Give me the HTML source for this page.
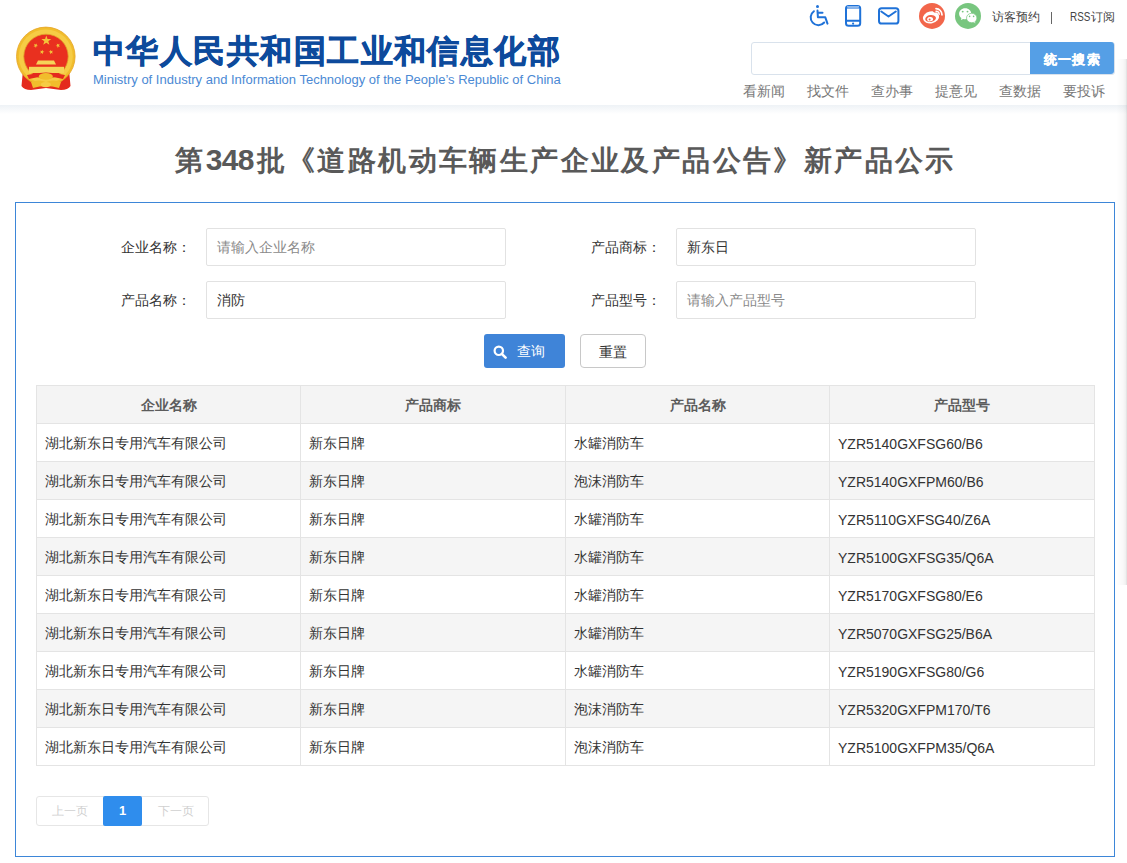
<!DOCTYPE html>
<html><head><meta charset="utf-8">
<style>
*{margin:0;padding:0;box-sizing:border-box;}
html,body{width:1127px;height:863px;overflow:hidden;background:#fff;font-family:"Liberation Sans",sans-serif;color:#333;}
.abs{position:absolute;}
#hdr{position:absolute;left:0;top:0;width:1127px;height:105px;background:#fff;}
#shadow{position:absolute;left:0;top:105px;width:1127px;height:9px;background:linear-gradient(#eef2f6,#fff);}
.cn-title{position:absolute;left:93px;top:29px;font-size:32px;font-weight:bold;-webkit-text-stroke:0.7px #0d4a9c;color:#0d4a9c;white-space:nowrap;letter-spacing:1.45px;line-height:44px;}
.en-title{position:absolute;left:93px;top:71px;font-size:13px;color:#4b89d4;white-space:nowrap;line-height:18px;}
.toplinks{position:absolute;top:8px;font-size:12px;color:#444;white-space:nowrap;line-height:18px;}
.search{position:absolute;left:751px;top:42px;width:364px;height:33px;border:1px solid #d9e2ec;border-radius:3px;background:#fff;}
.sbtn{position:absolute;left:1030px;top:42px;width:84px;height:32px;background:#559fe6;color:#fff;font-size:13px;font-weight:bold;text-align:center;line-height:35px;letter-spacing:1.4px;padding-left:1px;border-radius:0 3px 3px 0;-webkit-text-stroke:0.3px #fff;}
.nav{position:absolute;top:81px;font-size:14px;color:#777;white-space:nowrap;line-height:20px;}
#ptitle{position:absolute;left:2px;top:138px;width:1127px;text-align:center;font-size:28px;font-weight:bold;color:#595959;line-height:44px;white-space:nowrap;letter-spacing:2.4px;}
#box{position:absolute;left:15px;top:202px;width:1100px;height:655px;border:1px solid #3d86d8;}
.lbl{position:absolute;font-size:14px;color:#333;line-height:20px;white-space:nowrap;}
.inp{position:absolute;width:300px;height:38px;border:1px solid #e2e2e2;border-radius:2px;font-size:14px;line-height:37px;padding-left:10px;color:#333;white-space:nowrap;}
.ph{color:#8a8a8a;}
.btn1{position:absolute;left:484px;top:334px;width:81px;height:34px;background:#3f84d8;border-radius:3px;color:#fff;font-size:14px;line-height:34px;}
.btn2{position:absolute;left:580px;top:334px;width:66px;height:34px;border:1px solid #c8c8c8;border-radius:4px;color:#333;font-size:14px;line-height:34px;text-align:center;}
table{position:absolute;left:36px;top:385px;width:1058px;border-collapse:collapse;table-layout:fixed;}
td,th{border:1px solid #e4e4e4;height:38px;font-size:14px;padding:2px 0 0 8px;text-align:left;color:#333;white-space:nowrap;}
th{background:#f4f4f4;font-weight:bold;text-align:center;color:#5c5c5c;padding:2px 0 0 0;}
tr.z td{background:#f5f5f5;}
.pg{position:absolute;top:796px;height:31px;font-size:14px;line-height:29px;text-align:center;}
</style></head><body>
<div id="hdr">
  <!-- emblem -->
  <svg class="abs" style="left:0;top:0" width="90" height="100" viewBox="0 0 90 100">
    <path d="M23 70 L21.5 86 Q24 90 31 90 L46 88 L61 90 Q68 90 70.5 86 L69 70 Z" fill="#e42a1d"/>
    <circle cx="45.8" cy="56.4" r="29.3" fill="#f1bd2c" stroke="#e6a526" stroke-width="0.8"/>
    <circle cx="45.8" cy="56.4" r="27" fill="#f6cc45"/>
    <circle cx="46" cy="56.4" r="22.2" fill="#e9301f" stroke="#e0a02a" stroke-width="0.8"/>
    <polygon points="46.30,35.40 47.53,38.90 51.25,38.99 48.30,41.25 49.36,44.81 46.30,42.70 43.24,44.81 44.30,41.25 41.35,38.99 45.07,38.90" fill="#f3c43a"/>
    <polygon points="36.90,43.52 36.61,45.19 38.05,46.10 36.37,46.34 35.95,47.99 35.20,46.47 33.51,46.58 34.72,45.39 34.09,43.82 35.60,44.61" fill="#f3c43a"/>
    <polygon points="56.80,43.52 58.10,44.61 59.61,43.82 58.98,45.39 60.19,46.58 58.50,46.47 57.75,47.99 57.33,46.34 55.65,46.10 57.09,45.19" fill="#f3c43a"/>
    <polygon points="42.62,49.68 42.78,51.37 44.40,51.87 42.84,52.54 42.86,54.24 41.74,52.97 40.13,53.51 41.00,52.05 39.99,50.69 41.64,51.07" fill="#f3c43a"/>
    <polygon points="50.38,49.68 51.36,51.07 53.01,50.69 52.00,52.05 52.87,53.51 51.26,52.97 50.14,54.24 50.16,52.54 48.60,51.87 50.22,51.37" fill="#f3c43a"/>
    <path d="M38 60.5 L54 60.5 L56 64.5 L36 64.5Z" fill="#f6d458"/>
    <rect x="29" y="66.8" width="35" height="6.2" fill="#f6d458"/>
    <path d="M27 75 Q46 70 65 75 L63 79 Q46 74 29 79Z" fill="#e42a1d"/>
    <ellipse cx="45.8" cy="76.4" rx="7" ry="3.4" fill="#f1bd2c"/>
    <path d="M31 82 Q39 79 46 82 Q53 79 61 82 L59 88 Q46 84 33 88Z" fill="#f1bd2c"/>
    <ellipse cx="45.8" cy="84.6" rx="5" ry="2.6" fill="#f6cc45"/>
  </svg>
  <div class="cn-title">中华人民共和国工业和信息化部</div>
  <div class="en-title">Ministry of Industry and Information Technology of the People’s Republic of China</div>


  <svg class="abs" style="left:800px;top:0" width="190" height="32" viewBox="800 0 190 32">
    <g fill="none" stroke="#1f72d8" stroke-width="2" stroke-linecap="round" stroke-linejoin="round">
      <path d="M817.5 10.6 L817.9 17.3 H825.3 L827.5 23.6"/>
      <path d="M818.4 12.7 H822.5"/>
      <path d="M813.9 11.2 A7.7 7.7 0 1 0 824.2 22.5"/>
      <rect x="846" y="6" width="14.2" height="19.8" rx="2.6"/>
      <path d="M846.5 20.8 H859.8"/>
      <rect x="879" y="8.2" width="19.4" height="15.4" rx="2.6"/>
      <path d="M881.3 11.5 L888.5 16.5 L895.8 11.5"/>
    </g>
    <circle cx="817.5" cy="6.5" r="1.5" fill="#1f72d8"/>
    <path d="M847 6.9 H859" stroke="#a9c9f2" stroke-width="1.4"/><path d="M847 8.1 H859" stroke="#1f72d8" stroke-width="0.9"/>
    <circle cx="853.1" cy="23.6" r="1.1" fill="#1f72d8"/>
    <circle cx="932" cy="15.9" r="13" fill="#f2664b"/>
    <circle cx="968" cy="15.9" r="13" fill="#78c67f"/>
    <ellipse cx="931" cy="17.4" rx="8.2" ry="6" transform="rotate(-12 931 17.4)" fill="#fff"/>
    <circle cx="935" cy="10.6" r="2.1" fill="#f2664b"/>
    <ellipse cx="930.6" cy="18.5" rx="5.4" ry="3.5" transform="rotate(-10 930.6 18.5)" fill="#f2664b"/>
    <ellipse cx="930.1" cy="19.2" rx="3" ry="2.2" transform="rotate(-10 930.1 19.2)" fill="#fff"/>
    <circle cx="929.6" cy="19.6" r="1" fill="#f2664b"/>
    <path d="M936 8.6 A6.2 6.2 0 0 1 942 14.8" fill="none" stroke="#fff" stroke-width="1.7" stroke-linecap="round"/>
    <path d="M936 11.2 A3.2 3.2 0 0 1 939.2 14.2" fill="none" stroke="#fff" stroke-width="1.4" stroke-linecap="round"/>
    <path d="M965.2 8.3 C961.6 8.3 959.1 10.8 959.1 13.8 C959.1 15.6 960 17.1 961.4 18.1 L960.9 20.1 L963.2 18.9 C963.8 19.1 964.5 19.2 965.2 19.2 C968.8 19.2 971.3 16.8 971.3 13.8 C971.3 10.8 968.8 8.3 965.2 8.3Z" fill="#fff"/>
    <path d="M971.7 13.3 C968.8 13.3 966.5 15.4 966.5 18 C966.5 20.6 968.8 22.7 971.7 22.7 C972.3 22.7 972.9 22.6 973.4 22.4 L975.6 23.5 L975.2 21.5 C976.3 20.6 976.9 19.4 976.9 18 C976.9 15.4 974.6 13.3 971.7 13.3Z" fill="#fff" stroke="#78c67f" stroke-width="0.7"/>
    <circle cx="962.7" cy="11.6" r="0.95" fill="#78c67f"/><circle cx="967.5" cy="11.6" r="0.95" fill="#78c67f"/>
    <circle cx="969.6" cy="16.4" r="0.8" fill="#78c67f"/><circle cx="973.6" cy="16.4" r="0.8" fill="#78c67f"/>
  </svg>
  <div class="toplinks" style="left:992px">访客预约</div>
  <div class="abs" style="left:1051px;top:11.5px;width:1px;height:12px;background:#666"></div>
  <div class="toplinks" style="left:1070px"><span style="display:inline-block;transform:scaleX(0.76);transform-origin:0 0;font-size:13px">RSS</span></div>
  <div class="toplinks" style="left:1091px">订阅</div>
  <div class="search"></div>
  <div class="sbtn">统一搜索</div>

  <div class="nav" style="left:743px">看新闻</div>
  <div class="nav" style="left:807px">找文件</div>
  <div class="nav" style="left:871px">查办事</div>
  <div class="nav" style="left:935px">提意见</div>
  <div class="nav" style="left:999px">查数据</div>
  <div class="nav" style="left:1063px">要投诉</div>
</div>
<div id="shadow"></div>

<div id="ptitle">第<span style="font-size:30px;letter-spacing:-0.6px">34</span><span style="font-size:30px;letter-spacing:2px">8</span>批《道路机动车辆生产企业及产品公告》新产品公示</div>

<div id="box"></div>
<div class="lbl" style="left:121px;top:237px">企业名称：</div>
<div class="inp" style="left:206px;top:228px"><span class="ph">请输入企业名称</span></div>
<div class="lbl" style="left:591px;top:237px">产品商标：</div>
<div class="inp" style="left:676px;top:228px">新东日</div>
<div class="lbl" style="left:121px;top:290px">产品名称：</div>
<div class="inp" style="left:206px;top:281px">消防</div>
<div class="lbl" style="left:591px;top:290px">产品型号：</div>
<div class="inp" style="left:676px;top:281px"><span class="ph">请输入产品型号</span></div>

<div class="btn1"><svg style="position:absolute;left:9px;top:11px" width="15" height="14" viewBox="0 0 15 14"><circle cx="5.8" cy="5.8" r="4.2" fill="none" stroke="#fff" stroke-width="2.2"/><path d="M8.8 8.8 L12.6 12.6" stroke="#fff" stroke-width="2.6" stroke-linecap="round"/></svg><span style="position:absolute;left:33px;top:0">查询</span></div>
<div class="btn2">重置</div>

<table>
<colgroup><col style="width:264px"><col style="width:265px"><col style="width:264px"><col style="width:265px"></colgroup>
<tr><th>企业名称</th><th>产品商标</th><th>产品名称</th><th>产品型号</th></tr>
<tr><td>湖北新东日专用汽车有限公司</td><td>新东日牌</td><td>水罐消防车</td><td>YZR5140GXFSG60/B6</td></tr>
<tr class="z"><td>湖北新东日专用汽车有限公司</td><td>新东日牌</td><td>泡沫消防车</td><td>YZR5140GXFPM60/B6</td></tr>
<tr><td>湖北新东日专用汽车有限公司</td><td>新东日牌</td><td>水罐消防车</td><td>YZR5110GXFSG40/Z6A</td></tr>
<tr class="z"><td>湖北新东日专用汽车有限公司</td><td>新东日牌</td><td>水罐消防车</td><td>YZR5100GXFSG35/Q6A</td></tr>
<tr><td>湖北新东日专用汽车有限公司</td><td>新东日牌</td><td>水罐消防车</td><td>YZR5170GXFSG80/E6</td></tr>
<tr class="z"><td>湖北新东日专用汽车有限公司</td><td>新东日牌</td><td>水罐消防车</td><td>YZR5070GXFSG25/B6A</td></tr>
<tr><td>湖北新东日专用汽车有限公司</td><td>新东日牌</td><td>水罐消防车</td><td>YZR5190GXFSG80/G6</td></tr>
<tr class="z"><td>湖北新东日专用汽车有限公司</td><td>新东日牌</td><td>泡沫消防车</td><td>YZR5320GXFPM170/T6</td></tr>
<tr><td>湖北新东日专用汽车有限公司</td><td>新东日牌</td><td>泡沫消防车</td><td>YZR5100GXFPM35/Q6A</td></tr>
</table>

<div class="pg" style="left:36px;top:796px;width:173px;height:30px;border:1px solid #e6e6e6;border-radius:3px"></div>
<div class="pg" style="left:36px;width:67px;color:#d0d0d0;font-size:12px;line-height:30px">上一页</div>
<div class="pg" style="left:103px;width:39px;height:30px;background:#2f8ded;border-radius:2px;color:#fff;font-weight:bold;font-size:13px;line-height:30px">1</div>
<div class="pg" style="left:142px;width:67px;color:#d0d0d0;font-size:12px;line-height:30px">下一页</div>
<div class="abs" style="left:1116px;top:59px;width:11px;height:526px;background:linear-gradient(to right,rgba(0,0,0,0) 0%,rgba(0,0,0,0.025) 60%,rgba(0,0,0,0.05) 85%,rgba(0,0,0,0.13) 100%)"></div>
</body></html>
